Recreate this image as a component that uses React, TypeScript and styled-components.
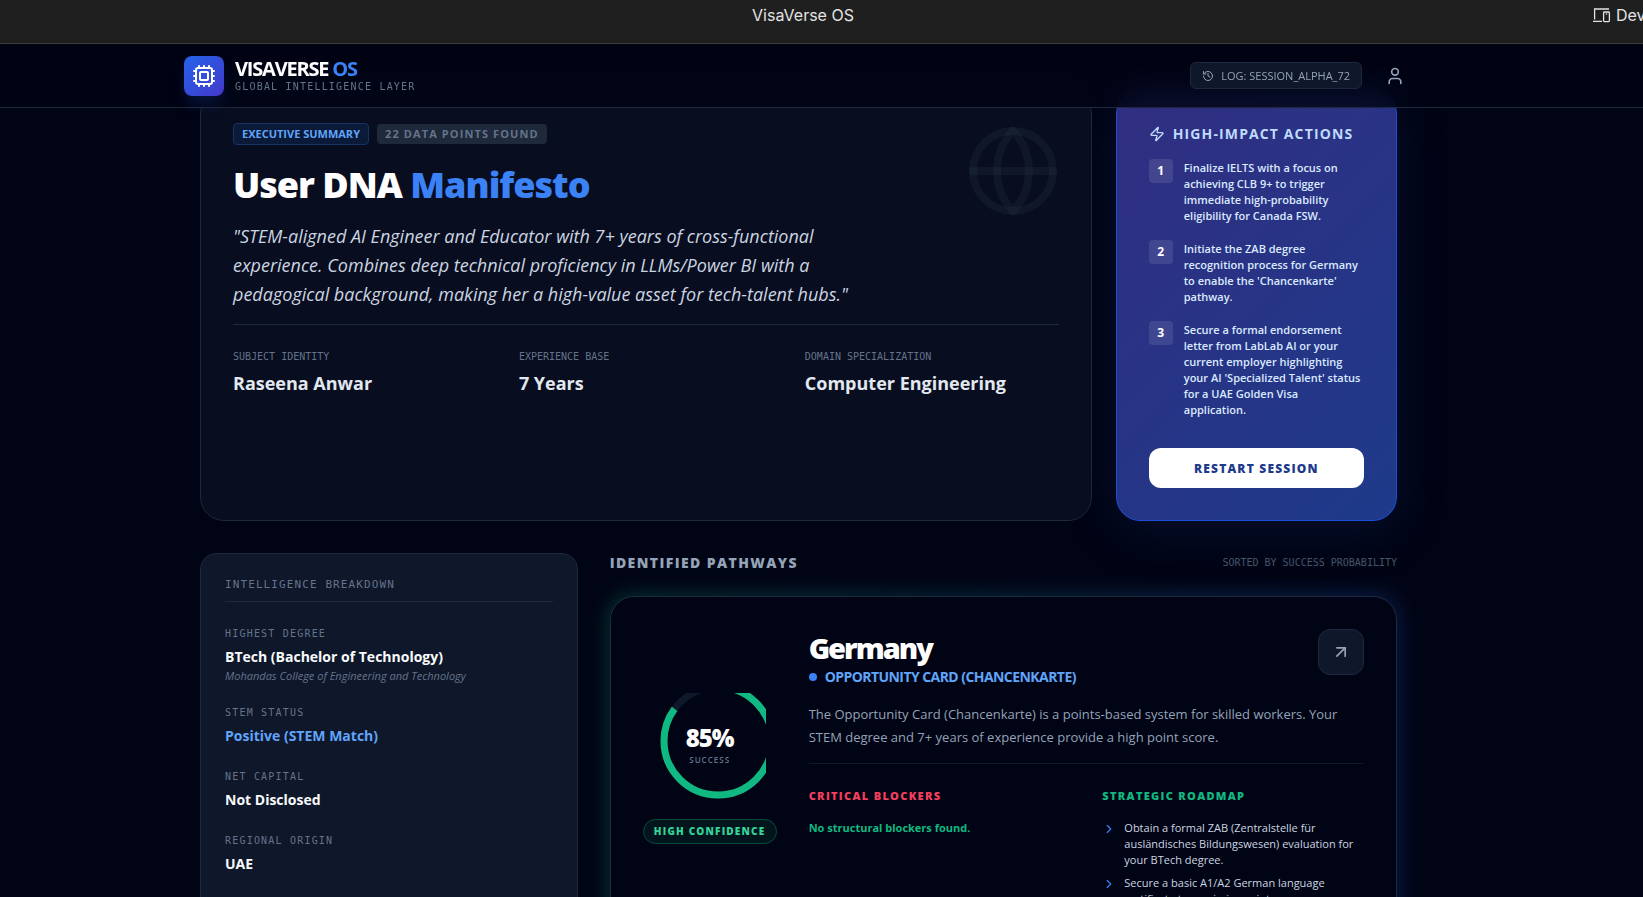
import React from 'react';
import styled, { createGlobalStyle } from 'styled-components';
import { ArrowUpRight, ChevronRight, Cpu, Globe, History, User, Zap } from 'lucide-react';

const sans = "'Open Sans', 'Noto Sans', sans-serif";
const mono = "'DejaVu Sans Mono', 'Liberation Mono', monospace";

const GlobalStyle = createGlobalStyle`
  *, *::before, *::after { box-sizing: border-box; }
  html, body { height: 100%; }
  body {
    margin: 0;
    background: #010414;
    color: #f1f5f9;
    font-family: ${sans};
    overflow: hidden;
  }
  #root { height: 100%; }
  h1, h2, h3, p, ul, ol, dl, dd { margin: 0; padding: 0; }
  ul, ol { list-style: none; }
  button { font-family: inherit; cursor: pointer; }
`;

const Viewport = styled.div`
  height: 100%;
  overflow: hidden;
`;

/* ---- preview bar ---- */

const PreviewBar = styled.div`
  display: flex;
  height: 44px;
  background: #1f1f1f;
  border-bottom: 1px solid #3c3c3c;
  color: #e3e3e3;
  font: 400 16px/30px Inter, sans-serif;
`;

const PreviewTitle = styled.span`
  flex: 1;
  padding-left: 14px;
  text-align: center;
`;

const DeviceButton = styled.button`
  flex: 0 0 51px;
  display: flex;
  align-items: center;
  gap: 5px;
  height: 30px;
  padding: 0;
  border: 0;
  background: none;
  color: inherit;
  font: inherit;
  white-space: nowrap;
  overflow: hidden;

  svg { flex: none; }
`;

/* ---- header ---- */

const Header = styled.header`
  position: sticky;
  top: 0;
  z-index: 10;
  padding-right: 46px;
  background: rgba(1, 4, 20, 0.8);
  backdrop-filter: blur(12px);
  border-bottom: 1px solid #1e293b;
`;

const HeaderInner = styled.div`
  display: flex;
  align-items: center;
  justify-content: space-between;
  max-width: 1229px;
  height: 63px;
  margin: 0 auto;
`;

const Brand = styled.div`
  display: flex;
  align-items: center;
  gap: 11px;
`;

const LogoTile = styled.div`
  display: grid;
  place-items: center;
  width: 40px;
  height: 40px;
  border-radius: 8px;
  background: linear-gradient(135deg, #2563eb, #4338ca);
  box-shadow: 0 10px 15px -3px rgba(37, 99, 235, 0.2);
`;

const BrandText = styled.div`
  padding-top: 2px;
`;

const BrandName = styled.div`
  font-size: 20px;
  font-weight: 700;
  line-height: 20px;
  letter-spacing: -0.06em;
  color: #fff;

  span { color: #3b82f6; }
`;

const MonoLabel = styled.div<{ $spaced?: boolean; $dim?: boolean }>`
  font-family: ${mono};
  font-size: 10px;
  line-height: 16px;
  letter-spacing: ${p => (p.$spaced ? '0.12em' : 'normal')};
  color: ${p => (p.$dim ? '#475569' : '#64748b')};
  text-transform: uppercase;
`;

const HeaderActions = styled.div`
  display: flex;
  align-items: center;
  gap: 15px;
`;

const LogButton = styled.button`
  display: flex;
  align-items: center;
  gap: 7px;
  height: 27px;
  padding: 0 11px;
  border: 1px solid #1e293b;
  border-radius: 6px;
  background: #0f172a;
  color: #94a3b8;
  font-size: 11px;
  line-height: 16px;
`;

const ProfileButton = styled.button`
  display: flex;
  padding: 8px;
  border: 0;
  background: none;
  color: #94a3b8;
`;

/* ---- page ---- */

const Page = styled.main`
  padding-right: 46px;
  margin-top: -18px;
`;

const Content = styled.div`
  display: flex;
  flex-direction: column;
  gap: 32px;
  max-width: 1197px;
  margin: 0 auto;
`;

const TopGrid = styled.div`
  display: grid;
  grid-template-columns: repeat(4, minmax(0, 1fr));
  gap: 24px;
`;

const HeroCard = styled.section`
  position: relative;
  grid-column: span 3;
  padding: 32px;
  border: 1px solid #1e293b;
  border-radius: 24px;
  background: #080d1f;
`;

const HeroGlobe = styled(Globe)`
  position: absolute;
  top: 32px;
  right: 30px;
  color: rgba(51, 65, 85, 0.2);
`;

const ChipRow = styled.div`
  display: flex;
  align-items: center;
  gap: 8px;
`;

const SummaryChip = styled.span`
  padding: 1px 8px;
  border: 1px solid #173363;
  border-radius: 4px;
  background: #0b1a38;
  color: #60a5fa;
  font-size: 11px;
  font-weight: 700;
  line-height: 18px;
  text-transform: uppercase;
`;

const CountChip = styled.span`
  padding: 2px 8px;
  border-radius: 4px;
  background: #1e293b;
  color: #64748b;
  font-size: 11px;
  font-weight: 700;
  line-height: 16px;
  letter-spacing: 0.1em;
  text-transform: uppercase;
`;

const HeroTitle = styled.h1`
  margin-top: 20px;
  font-size: 36px;
  font-weight: 800;
  line-height: 40px;
  letter-spacing: -1px;
  color: #fff;

  span { color: #3b82f6; }
`;

const Quote = styled.p`
  max-width: 672px;
  margin-top: 17px;
  color: #cbd5e1;
  font-size: 18px;
  font-style: italic;
  font-weight: 500;
  line-height: 29px;
`;

const HeroFacts = styled.dl`
  display: grid;
  grid-template-columns: repeat(3, minmax(0, 1fr));
  gap: 32px;
  margin-top: 15px;
  padding-top: 24px;
  border-top: 1px solid #1e293b;

  dd {
    margin-top: 4px;
    color: #e2e8f0;
    font-size: 18px;
    font-weight: 700;
    line-height: 28px;
    white-space: nowrap;
  }
`;

const ActionsCard = styled.section`
  display: flex;
  flex-direction: column;
  padding: 32px;
  border: 1px solid #1d4ed8;
  border-radius: 24px;
  background: linear-gradient(135deg, #312e81, #1e3a8a) border-box;
  border-color: #1d4ed8;
  box-shadow: 0 10px 50px rgba(30, 58, 138, 0.2);
`;

const ActionsTitle = styled.h2`
  display: flex;
  align-items: center;
  gap: 8px;
  color: #bfdbfe;
  font-size: 14px;
  font-weight: 700;
  line-height: 22px;
  letter-spacing: 0.08em;
  white-space: nowrap;
  text-transform: uppercase;
`;

const ActionList = styled.ol`
  display: flex;
  flex-direction: column;
  gap: 16px;
  margin-top: 14px;
`;

const ActionItem = styled.li`
  display: flex;
  gap: 11px;
  color: #dbeafe;
  font-size: 11px;
  font-weight: 600;
  line-height: 16px;

  p { padding: 1px 3px 0 0; }
`;

const StepNumber = styled.span`
  display: grid;
  place-items: center;
  flex: none;
  width: 24px;
  height: 24px;
  border-radius: 4px;
  background: rgba(255, 255, 255, 0.1);
  color: #fff;
  font-size: 12px;
  font-weight: 700;
`;

const RestartButton = styled.button`
  height: 40px;
  margin-top: 30px;
  border: 0;
  border-radius: 12px;
  background: #fff;
  color: #1e3a8a;
  font-size: 12px;
  font-weight: 800;
  letter-spacing: 0.1em;
  text-transform: uppercase;
`;

const LowerGrid = styled.div`
  display: grid;
  grid-template-columns: repeat(3, minmax(0, 1fr));
  gap: 32px;
`;

const BreakdownCard = styled.section`
  padding: 24px;
  border: 1px solid #1e293b;
  border-radius: 16px;
  background: #0f172a;
`;

const BreakdownTitle = styled.h2`
  padding-bottom: 9px;
  border-bottom: 1px solid #1e293b;
  color: #64748b;
  font-family: ${mono};
  font-size: 11px;
  font-weight: 400;
  line-height: 14px;
  letter-spacing: 0.1em;
  text-transform: uppercase;
`;

const FactList = styled.dl`
  display: flex;
  flex-direction: column;
  gap: 22px;
  margin-top: 24px;
`;

const FactValue = styled.dd<{ $accent?: boolean }>`
  margin-top: 4px;
  color: ${p => (p.$accent ? '#60a5fa' : '#f8fafc')};
  font-size: 14px;
  font-weight: 700;
  line-height: 22px;
`;

const FactNote = styled.dd`
  color: #64748b;
  font-size: 11px;
  font-style: italic;
  font-weight: 500;
  line-height: 15px;
`;

const Pathways = styled.section`
  grid-column: span 2;
`;

const SectionHead = styled.div`
  display: flex;
  align-items: center;
  justify-content: space-between;
  padding-bottom: 23px;
`;

const SectionTitle = styled.h2`
  color: #94a3b8;
  font-size: 14px;
  font-weight: 800;
  line-height: 20px;
  letter-spacing: 0.1em;
  text-transform: uppercase;
`;

const PathwayFrame = styled.div`
  position: relative;
  isolation: isolate;

  &::before {
    content: '';
    position: absolute;
    inset: -2px;
    z-index: -1;
    border-radius: 24px;
    background: linear-gradient(90deg, #10b981, #2563eb);
    filter: blur(10px);
    opacity: 0.25;
  }
`;

const PathwayCard = styled.article`
  display: flex;
  gap: 32px;
  padding: 32px;
  border: 1px solid #1e293b;
  border-radius: 24px;
  background: #010414;
`;

const ScoreColumn = styled.div`
  flex: 0 0 134px;
  display: flex;
  flex-direction: column;
  align-items: center;
  justify-content: center;
  gap: 14px;
`;

const Gauge = styled.div`
  display: grid;
  width: 112px;
  height: 112px;

  > * { grid-area: 1 / 1; }
  svg { transform: rotate(-90deg); }
`;

const GaugeText = styled.div`
  display: flex;
  flex-direction: column;
  align-items: center;
  justify-content: center;
  padding-bottom: 10px;
  color: #fff;
  font-size: 24px;
  font-weight: 800;
  line-height: 32px;
  letter-spacing: -1px;

  small {
    color: #64748b;
    font-size: 8px;
    font-weight: 600;
    line-height: 12px;
    letter-spacing: 1px;
    text-transform: uppercase;
  }
`;

const ConfidenceChip = styled.span`
  width: 100%;
  height: 25px;
  border: 1px solid #064e3b;
  border-radius: 13px;
  background: #02151d;
  color: #34d399;
  font-size: 10px;
  font-weight: 800;
  line-height: 23px;
  letter-spacing: 0.12em;
  text-align: center;
  text-transform: uppercase;
  white-space: nowrap;
`;

const PathwayBody = styled.div`
  flex: 1;
  min-width: 0;
`;

const PathwayTop = styled.div`
  display: flex;
  align-items: flex-start;
  justify-content: space-between;
`;

const Country = styled.h3`
  color: #fff;
  font-size: 29px;
  font-weight: 800;
  line-height: 38px;
  letter-spacing: -2px;
`;

const Program = styled.div`
  display: flex;
  align-items: center;
  gap: 8px;
  color: #60a5fa;
  font-size: 14px;
  font-weight: 700;
  line-height: 20px;
  letter-spacing: -0.04em;
  text-transform: uppercase;

  &::before {
    content: '';
    width: 8px;
    height: 8px;
    border-radius: 50%;
    background: #3b82f6;
  }
`;

const OpenButton = styled.button`
  display: grid;
  place-items: center;
  width: 46px;
  height: 46px;
  padding: 0;
  border: 1px solid #1e293b;
  border-radius: 12px;
  background: #0f172a;
  color: #94a3b8;
`;

const Description = styled.p`
  margin-top: 16px;
  padding-bottom: 14px;
  border-bottom: 1px solid #0f172a;
  color: #94a3b8;
  font-size: 13px;
  line-height: 23px;
`;

const Columns = styled.div`
  display: grid;
  grid-template-columns: repeat(2, minmax(0, 1fr));
  gap: 32px;
  margin-top: 24px;
`;

const ColumnTitle = styled.h3<{ $tone: string }>`
  color: ${p => p.$tone};
  font-size: 11px;
  font-weight: 800;
  line-height: 16px;
  letter-spacing: 0.12em;
  text-transform: uppercase;
`;

const ClearNote = styled.p`
  margin-top: 16px;
  color: #10b981;
  font-size: 11px;
  font-weight: 700;
  line-height: 16px;
`;

const Roadmap = styled.ul`
  display: flex;
  flex-direction: column;
  gap: 7px;
  margin-top: 16px;
`;

const RoadmapItem = styled.li`
  display: flex;
  gap: 8px;
  color: #cbd5e1;
  font-size: 11px;
  font-weight: 500;
  line-height: 16px;

  svg {
    flex: none;
    margin-top: 2px;
    color: #3b82f6;
  }
`;

const DevicesIcon = () => (
  <svg width="19" height="16" viewBox="0 0 19 16" fill="none" stroke="currentColor" strokeWidth="1.3" aria-hidden="true">
    <path d="M17 2H2.6v10.4M1 14.4h9" />
    <rect x="11.6" y="5" width="5.8" height="9.6" rx="0.8" />
    <path d="M13.8 7h1.4" />
  </svg>
);

const actions = [
  'Finalize IELTS with a focus on achieving CLB 9+ to trigger immediate high-probability eligibility for Canada FSW.',
  "Initiate the ZAB degree recognition process for Germany to enable the 'Chancenkarte' pathway.",
  "Secure a formal endorsement letter from LabLab AI or your current employer highlighting your AI 'Specialized Talent' status for a UAE Golden Visa application.",
];

const heroFacts = [
  ['Subject Identity', 'Raseena Anwar'],
  ['Experience Base', '7 Years'],
  ['Domain Specialization', 'Computer Engineering'],
];

const facts = [
  { label: 'Highest Degree', value: 'BTech (Bachelor of Technology)', note: 'Mohandas College of Engineering and Technology' },
  { label: 'STEM Status', value: 'Positive (STEM Match)', accent: true },
  { label: 'Net Capital', value: 'Not Disclosed' },
  { label: 'Regional Origin', value: 'UAE' },
];

const roadmap = [
  'Obtain a formal ZAB (Zentralstelle für ausländisches Bildungswesen) evaluation for your BTech degree.',
  'Secure a basic A1/A2 German language certificate to maximize points.',
];

const SCORE = 85;
const RADIUS = 54;
const CIRCUMFERENCE = 2 * Math.PI * RADIUS;

export default function App() {
  return (
    <Viewport>
      <GlobalStyle />
      <PreviewBar>
        <PreviewTitle>VisaVerse OS</PreviewTitle>
        <DeviceButton type="button"><DevicesIcon />Dev</DeviceButton>
      </PreviewBar>

      <Header>
        <HeaderInner>
          <Brand>
            <LogoTile><Cpu size={24} color="#fff" /></LogoTile>
            <BrandText>
              <BrandName>VISAVERSE <span>OS</span></BrandName>
              <MonoLabel $spaced>Global Intelligence Layer</MonoLabel>
            </BrandText>
          </Brand>
          <HeaderActions>
            <LogButton type="button"><History size={12} />LOG: SESSION_ALPHA_72</LogButton>
            <ProfileButton type="button" aria-label="Profile"><User size={20} /></ProfileButton>
          </HeaderActions>
        </HeaderInner>
      </Header>

      <Page>
        <Content>
          <TopGrid>
            <HeroCard>
              <HeroGlobe size={96} />
              <ChipRow>
                <SummaryChip>Executive Summary</SummaryChip>
                <CountChip>22 Data Points Found</CountChip>
              </ChipRow>
              <HeroTitle>User DNA <span>Manifesto</span></HeroTitle>
              <Quote>
                "STEM-aligned AI Engineer and Educator with 7+ years of cross-functional experience. Combines deep
                technical proficiency in LLMs/Power BI with a pedagogical background, making her a high-value asset for
                tech-talent hubs."
              </Quote>
              <HeroFacts>
                {heroFacts.map(([label, value]) => (
                  <div key={label}>
                    <MonoLabel as="dt">{label}</MonoLabel>
                    <dd>{value}</dd>
                  </div>
                ))}
              </HeroFacts>
            </HeroCard>

            <ActionsCard>
              <ActionsTitle><Zap size={16} />High-Impact Actions</ActionsTitle>
              <ActionList>
                {actions.map((text, i) => (
                  <ActionItem key={text}>
                    <StepNumber>{i + 1}</StepNumber>
                    <p>{text}</p>
                  </ActionItem>
                ))}
              </ActionList>
              <RestartButton type="button">Restart Session</RestartButton>
            </ActionsCard>
          </TopGrid>

          <LowerGrid>
            <BreakdownCard>
              <BreakdownTitle>Intelligence Breakdown</BreakdownTitle>
              <FactList>
                {facts.map(f => (
                  <div key={f.label}>
                    <MonoLabel as="dt" $spaced>{f.label}</MonoLabel>
                    <FactValue $accent={f.accent}>{f.value}</FactValue>
                    {f.note && <FactNote>{f.note}</FactNote>}
                  </div>
                ))}
              </FactList>
            </BreakdownCard>

            <Pathways>
              <SectionHead>
                <SectionTitle>Identified Pathways</SectionTitle>
                <MonoLabel $dim>Sorted by success probability</MonoLabel>
              </SectionHead>
              <PathwayFrame>
                <PathwayCard>
                  <ScoreColumn>
                    <Gauge>
                      <svg width="112" height="112" fill="none" strokeWidth="7" aria-hidden="true">
                        <circle cx="64" cy="64" r={RADIUS} stroke="#0f172a" />
                        <circle
                          cx="64"
                          cy="64"
                          r={RADIUS}
                          stroke="#10b981"
                          strokeDasharray={CIRCUMFERENCE}
                          strokeDashoffset={CIRCUMFERENCE * (1 - SCORE / 100)}
                        />
                      </svg>
                      <GaugeText>{SCORE}%<small>Success</small></GaugeText>
                    </Gauge>
                    <ConfidenceChip>High Confidence</ConfidenceChip>
                  </ScoreColumn>
                  <PathwayBody>
                    <PathwayTop>
                      <div>
                        <Country>Germany</Country>
                        <Program>Opportunity Card (Chancenkarte)</Program>
                      </div>
                      <OpenButton type="button" aria-label="Open pathway"><ArrowUpRight size={20} /></OpenButton>
                    </PathwayTop>
                    <Description>
                      The Opportunity Card (Chancenkarte) is a points-based system for skilled workers. Your STEM degree
                      and 7+ years of experience provide a high point score.
                    </Description>
                    <Columns>
                      <div>
                        <ColumnTitle $tone="#f43f5e">Critical Blockers</ColumnTitle>
                        <ClearNote>No structural blockers found.</ClearNote>
                      </div>
                      <div>
                        <ColumnTitle $tone="#10b981">Strategic Roadmap</ColumnTitle>
                        <Roadmap>
                          {roadmap.map(text => (
                            <RoadmapItem key={text}><ChevronRight size={14} /><p>{text}</p></RoadmapItem>
                          ))}
                        </Roadmap>
                      </div>
                    </Columns>
                  </PathwayBody>
                </PathwayCard>
              </PathwayFrame>
            </Pathways>
          </LowerGrid>
        </Content>
      </Page>
    </Viewport>
  );
}
